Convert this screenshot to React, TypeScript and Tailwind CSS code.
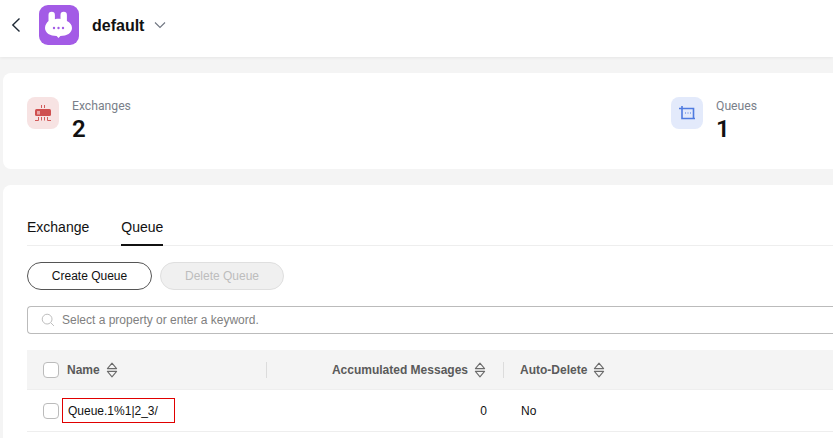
/** Queue list page of the default instance. */
function SortIcon() {
  return (
    <svg viewBox="0 0 12 16" className="ml-1.5 h-4 w-3 shrink-0 text-[#6b6b6b]" fill="none" stroke="currentColor" strokeWidth="1.1">
      <path d="M6 1.2 10.6 6.6H1.4Z" strokeLinejoin="round" />
      <path d="M6 14.8 10.6 9.4H1.4Z" strokeLinejoin="round" />
    </svg>
  );
}

function Checkbox() {
  return <span className="h-4 w-4 shrink-0 rounded-[4px] border border-[#bbbbbb] bg-white" />;
}

function Logo() {
  return (
    <div className="flex h-10 w-10 items-center justify-center rounded-[9px] bg-[#a35be6]">
      <svg viewBox="0 0 40 40" className="h-10 w-10">
        <path d="M9.500 16V10a3.200 3.200 0 0 1 6.400 0v4.200c1.300-.3 2.700-.4 4.100-.4 .5 0 1 0 1.500 .1V10a3.200 3.200 0 0 1 6.400 0v6c3.200 1.600 5.100 4 5.100 7 0 5-5.200 8-11.600 8L19.500 33 17.600 31C11.200 31 6 28 6 23c0-3 1.900-5.400 3.500-7Z" fill="#ffffff" />
        <circle cx="15" cy="23" r="1.200" fill="#a35be6" />
        <circle cx="19.500" cy="23" r="1.200" fill="#a35be6" />
        <circle cx="24" cy="23" r="1.200" fill="#a35be6" />
      </svg>
    </div>
  );
}

function ExchangeIcon() {
  return (
    <div className="flex h-8 w-8 items-center justify-center rounded-lg bg-[#f7e3e3]">
      <svg viewBox="0 0 32 32" className="h-8 w-8" fill="none">
        <path d="M14.500 8v3M17.500 8v3" stroke="#d25b5b" strokeWidth="1" />
        <rect x="8" y="12" width="16" height="7" rx="1.500" fill="#cf4f4f" />
        <rect x="10" y="14" width="3" height="3.500" fill="#e9a5a5" />
        <path d="M8 23.500h3.500V20M14.500 20v3.500M17.500 20v3.500M20.500 20v3.500H24" stroke="#d25b5b" strokeWidth="1" />
      </svg>
    </div>
  );
}

function QueueIcon() {
  return (
    <div className="flex h-8 w-8 items-center justify-center rounded-lg bg-[#e3eafb]">
      <svg viewBox="0 0 32 32" className="h-8 w-8" fill="none" stroke="#4f7be0" strokeWidth="1.600">
        <path d="M8 11.500h14.500V22M11 9v12.500h13" />
        <path d="M14 16h1M16.500 16h1M19 16h1" strokeWidth="1" />
      </svg>
    </div>
  );
}

function Stat({ label, value, icon }: { label: string; value: string; icon: React.ReactNode }) {
  return (
    <div className="flex items-start gap-[13px]">
      {icon}
      <div className="pt-[2px]">
        <div className="text-[12.200px] leading-[14px] text-[#7a7f8a] font-['Roboto',sans-serif]">{label}</div>
        <div className="mt-[2px] text-2xl leading-[28px] font-semibold text-[#111111] font-['Roboto',sans-serif]">{value}</div>
      </div>
    </div>
  );
}

export default function App() {
  return (
    <div className="h-[438px] w-[833px] overflow-hidden bg-[#f4f4f4] font-['Liberation_Sans',Arial,sans-serif]">
      <header className="flex h-[57px] items-center bg-white pb-[7px] shadow-[0_1px_3px_rgba(0,0,0,0.06)]">
        <svg viewBox="0 0 12 16" className="ml-[10px] h-4 w-3 text-[#1f2a36]" fill="none" stroke="currentColor" strokeWidth="1.400">
          <path d="M9.500 1.500 2.800 8l6.700 6.500" />
        </svg>
        <div className="ml-[17px]">
          <Logo />
        </div>
        <span className="ml-[13px] pt-[1px] text-base font-bold text-[#111111]">default</span>
        <svg viewBox="0 0 12 8" className="ml-[10px] h-2 w-3 text-[#6f7580]" fill="none" stroke="currentColor" strokeWidth="1.100">
          <path d="M1 1.500 6 6.500l5-5" />
        </svg>
      </header>

      <section className="ml-[3px] mt-4 flex h-[96px] rounded-l-lg bg-white pl-6 pt-6">
        <div className="w-[644px]">
          <Stat label="Exchanges" value="2" icon={<ExchangeIcon />} />
        </div>
        <Stat label="Queues" value="1" icon={<QueueIcon />} />
      </section>

      <section className="ml-[3px] mt-4 h-[260px] rounded-l-lg bg-white pl-6 pt-[26px]">
        <div className="flex h-[35px] gap-8 border-b border-[#eeeeee] text-sm text-[#111111]">
          <span className="pt-2 leading-4">Exchange</span>
          <span className="mb-[-1px] border-b-2 border-[#111111] pt-2 leading-4">Queue</span>
        </div>

        <div className="mt-4 flex gap-2">
          <button type="button" className="h-7 w-[125px] rounded-full border border-[#555555] bg-white text-xs text-[#111111]">
            Create Queue
          </button>
          <button type="button" className="h-7 w-[124px] rounded-full border border-[#dfdfdf] bg-[#f0f0f0] text-xs text-[#bdbdbd]">
            Delete Queue
          </button>
        </div>

        <div className="mt-4 flex h-7 items-center rounded-l border border-r-0 border-[#bbbbbb] pl-[13px] text-xs text-[#808080]">
          <svg viewBox="0 0 16 16" className="mr-[7px] h-[14px] w-[14px] text-[#bbbbbb]" fill="none" stroke="currentColor" strokeWidth="1.100">
            <circle cx="7" cy="7" r="5.600" />
            <path d="m11.200 11.200 3.600 3.600" />
          </svg>
          Select a property or enter a keyword.
        </div>

        <div className="mt-4 flex h-10 items-center border-b border-[#eeeeee] bg-[#f4f4f4] text-xs font-bold text-[#5a5a5a]">
          <div className="flex w-[240px] items-center border-r border-[#dcdcdc] pl-4">
            <Checkbox />
            <span className="ml-2">Name</span>
            <SortIcon />
          </div>
          <div className="flex w-[237px] items-center justify-end border-r border-[#dcdcdc] pr-[17px]">
            Accumulated Messages
            <SortIcon />
          </div>
          <div className="flex items-center pl-4">
            Auto-Delete
            <SortIcon />
          </div>
        </div>

        <div className="flex h-[42px] items-center border-b border-[#eeeeee] text-xs text-[#111111]">
          <div className="flex w-[240px] items-center pl-4">
            <Checkbox />
            <span className="ml-[3px] flex h-[25px] w-[113px] items-center border border-[#e00000] pl-[5px]">Queue.1%1|2_3/</span>
          </div>
          <div className="w-[220px] text-right">0</div>
          <div className="pl-[34px]">No</div>
        </div>
      </section>
    </div>
  );
}
